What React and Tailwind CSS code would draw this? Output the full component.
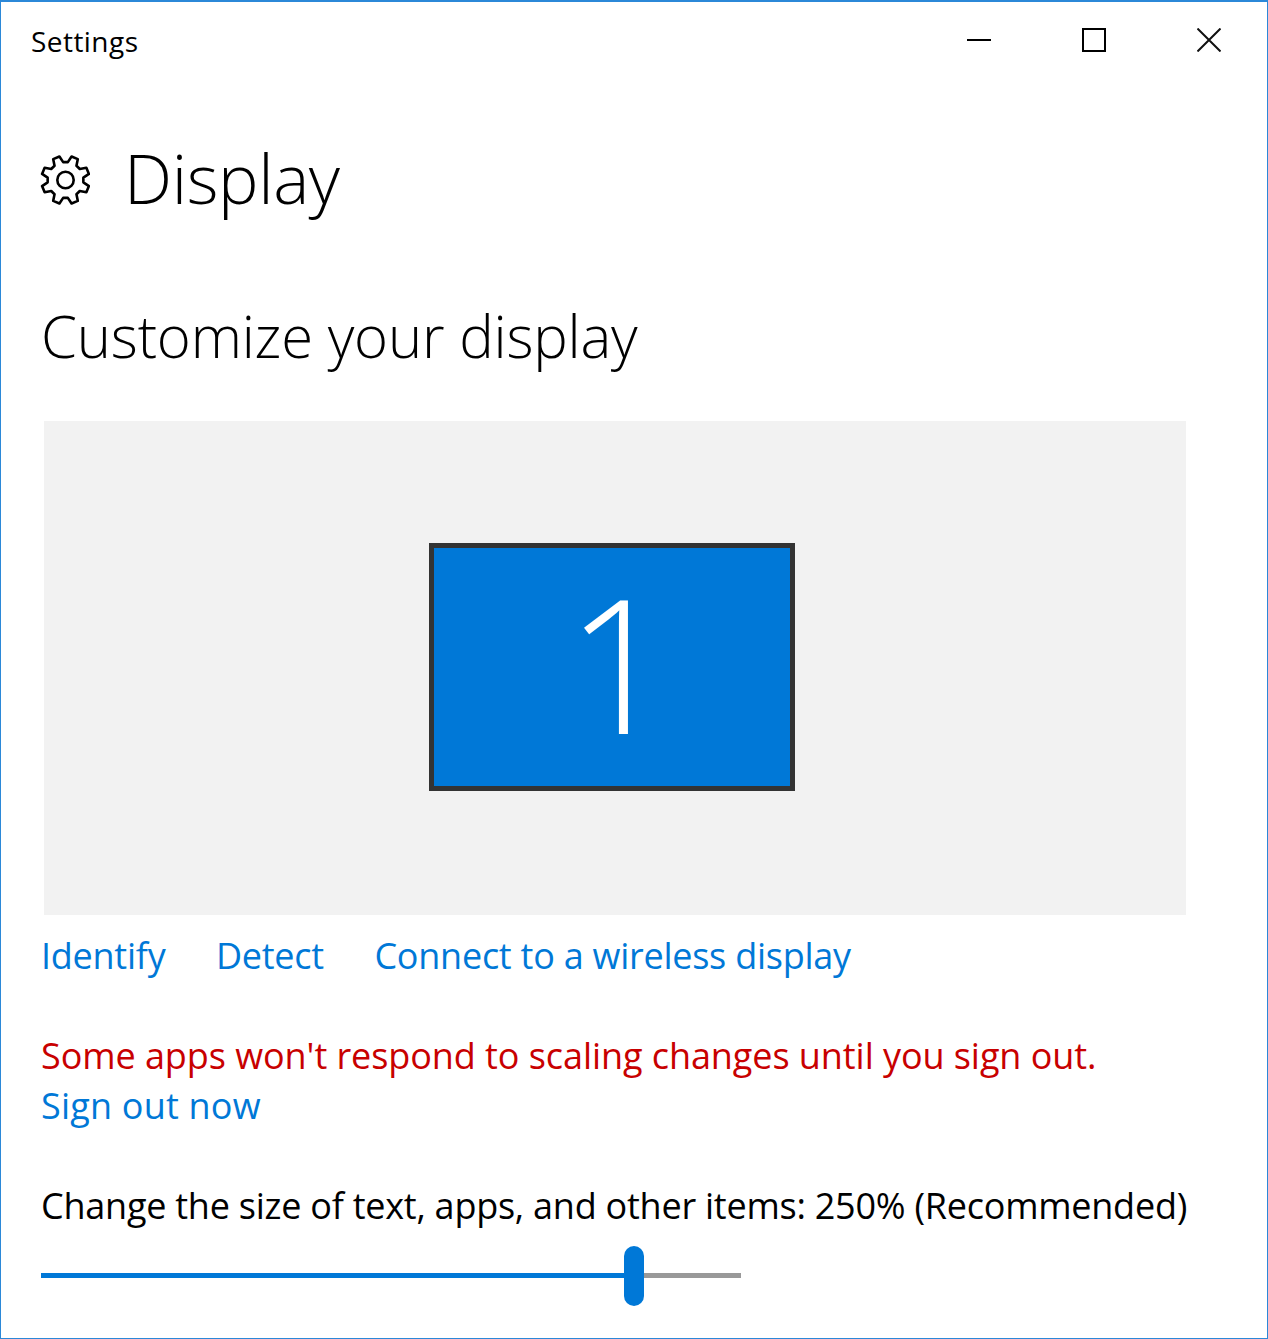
const gearPath = (() => {
  // 8 teeth, turned so that none points straight up
  const pts = [];
  for (let i = 0; i < 8; i++) {
    const mid = (i * 45 + 22.5 - 90) * (Math.PI / 180);
    const a = (d, r) => {
      const t = mid + d * (Math.PI / 180);
      pts.push(`${(25.5 + r * Math.cos(t)).toFixed(2)} ${(25 + r * Math.sin(t)).toFixed(2)}`);
    };
    a(-15, 18);
    a(-8, 24.2);
    a(8, 24.2);
    a(15, 18);
  }
  return `M${pts.join("L")}Z`;
})();

function GearIcon() {
  return (
    <svg width="50" height="50" viewBox="0 0 50 50" fill="none" stroke="#000" strokeWidth="2.6" strokeLinejoin="round">
      <path d={gearPath} />
      <circle cx="25.5" cy="25" r="8.2" />
    </svg>
  );
}

function WindowButtons() {
  return (
    <div className="flex h-[80px] pt-[24px]">
      <button className="flex h-[28px] w-[115px] items-center justify-center">
        <svg width="24" height="28" viewBox="0 0 24 28">
          <rect x="0" y="13" width="24" height="2" fill="#000" />
        </svg>
      </button>
      <button className="flex h-[28px] w-[115px] items-center justify-center">
        <svg width="24" height="24" viewBox="0 0 24 24" fill="none" stroke="#000" strokeWidth="2">
          <rect x="1" y="1" width="22" height="22" />
        </svg>
      </button>
      <button className="flex h-[28px] w-[115px] items-center justify-center">
        <svg width="24" height="24" viewBox="0 0 24 24" fill="none" stroke="#111" strokeWidth="2">
          <path d="M0.5 0.5L23.5 23.5M23.5 0.5L0.5 23.5" />
        </svg>
      </button>
    </div>
  );
}

export default function App() {
  return (
    <div className="h-[1339px] w-[1268px] overflow-hidden border border-t-2 border-[#2b88d8] bg-white font-['Open_Sans',sans-serif] text-black">
      <header className="flex items-start justify-between pr-[1px] pl-[30px]">
        <span className="pt-[18px] text-[28px] leading-[42px] tracking-[0.45px]">Settings</span>
        <WindowButtons />
      </header>

      <div className="mt-[68px] flex items-center pl-[39px]">
        <GearIcon />
        <h1 className="ml-[34px] h-[60px] text-[68px] leading-[55px] font-light tracking-[-0.35px]">Display</h1>
      </div>

      <main className="pl-[40px]">
        <h2 className="mt-[91px] text-[58px] leading-[70px] font-light tracking-[-0.2px]">Customize your display</h2>

        <div className="mt-[50px] ml-[3px] flex h-[494px] w-[1142px] items-center justify-center bg-[#f2f2f2] pr-[6px] pb-[2px]">
          <div className="flex h-[248px] w-[366px] items-center justify-center border-[5px] border-[#333333] bg-[#0078d7] pb-[10px] pl-[14px]">
            <span className="text-[186px] leading-none font-light text-white">1</span>
          </div>
        </div>

        <div className="mt-[16px] flex gap-[50.5px] text-[36px] leading-[50px] tracking-[-0.25px] text-[#0078d7]">
          <span>Identify</span>
          <span>Detect</span>
          <span>Connect to a wireless display</span>
        </div>

        <p className="mt-[50px] text-[36px] leading-[50px] tracking-[-0.07px] text-[#c80000]">
          Some apps won't respond to scaling changes until you sign out.
        </p>
        <p className="text-[36px] leading-[50px] tracking-[0.2px] text-[#0078d7]">Sign out now</p>

        <p className="mt-[50px] text-[36px] leading-[50px] tracking-[-0.24px]">
          Change the size of text, apps, and other items: 250% (Recommended)
        </p>

        <div className="relative mt-[15px] h-[60px] w-[700px]">
          <div className="flex h-full items-center pb-[1px]">
            <div className="h-[5px] w-[583px] bg-[#0078d7]" />
            <div className="h-[5px] flex-1 bg-[#999999]" />
          </div>
          <div className="absolute top-0 left-[583px] h-[60px] w-[20px] rounded-full bg-[#0078d7]" />
        </div>
      </main>
    </div>
  );
}
